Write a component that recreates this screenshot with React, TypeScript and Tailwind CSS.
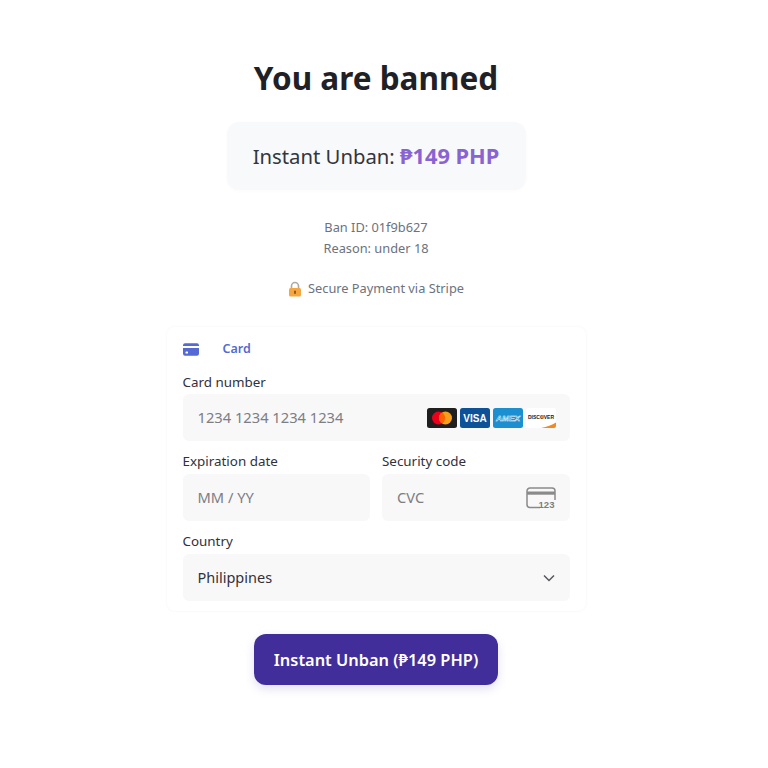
const font = { fontFamily: '"Noto Sans", "Open Sans", sans-serif' };

function LockIcon() {
  return (
    <svg width="14" height="16" viewBox="0 0 14 16" aria-hidden>
      <path d="M3.5 8V5a3.5 3.5 0 0 1 7 0v3" fill="none" stroke="#b0a9a3" strokeWidth="1.6" />
      <rect x="1" y="7" width="12" height="8.5" rx="1.5" fill="#f5a63f" />
      <rect x="6.2" y="9.6" width="1.6" height="3.4" rx="0.8" fill="#7a4a1a" />
    </svg>
  );
}

function CardTabIcon() {
  return (
    <svg width="16" height="13" viewBox="0 0 16 13" aria-hidden>
      <path d="M0 2.2A2 2 0 0 1 2 .3h12a2 2 0 0 1 2 1.9V3H0z" fill="#5469d4" />
      <path d="M0 5h16v5.8a2 2 0 0 1-2 1.9H2a2 2 0 0 1-2-1.9z" fill="#5469d4" />
      <rect x="2.5" y="8.5" width="2.5" height="2" rx="0.6" fill="#fff" />
    </svg>
  );
}

function Mastercard() {
  return (
    <svg width="30" height="20" viewBox="0 0 30 20" aria-hidden>
      <rect width="30" height="20" rx="2.5" fill="#1f1f1f" />
      <circle cx="11.5" cy="10" r="6.5" fill="#eb001b" />
      <circle cx="18.5" cy="10" r="6.5" fill="#f79e1b" />
      <path d="M15 4.5a6.5 6.5 0 0 1 0 11 6.5 6.5 0 0 1 0-11z" fill="#ff5f00" />
    </svg>
  );
}

function Visa() {
  return (
    <svg width="30" height="20" viewBox="0 0 30 20" aria-hidden>
      <rect width="30" height="20" rx="2.5" fill="#0d5299" />
      <text x="15" y="13.8" textAnchor="middle" fontSize="10" fontWeight="800" fill="#fff" fontFamily="Liberation Sans, sans-serif">VISA</text>
    </svg>
  );
}

function Amex() {
  return (
    <svg width="30" height="20" viewBox="0 0 30 20" aria-hidden>
      <rect width="30" height="20" rx="2.5" fill="#1b8fd0" />
      <text x="15" y="12.8" textAnchor="middle" fontSize="8" fontWeight="700" fontStyle="italic" fill="none" stroke="#fff" strokeWidth="0.4" textLength="24" lengthAdjust="spacingAndGlyphs" fontFamily="Liberation Sans, sans-serif">AMEX</text>
    </svg>
  );
}

function Discover() {
  return (
    <svg width="30" height="20" viewBox="0 0 30 20" aria-hidden>
      <rect width="30" height="20" rx="2.5" fill="#fff" />
      <path d="M15 20c6-1 11-3 15-5.5V18a2 2 0 0 1-2 2z" fill="#f08a24" />
      <text x="15" y="10.5" textAnchor="middle" fontSize="5" fontWeight="700" fill="#222" fontFamily="Liberation Sans, sans-serif">DISCOVER</text>
      <circle cx="16.6" cy="8.8" r="1.7" fill="#f08a24" />
    </svg>
  );
}

function CvcIcon() {
  return (
    <svg width="30" height="22" viewBox="0 0 30 22" aria-hidden>
      <path d="M14 20.5H4a3 3 0 0 1-3-3V4a3 3 0 0 1 3-3h22a3 3 0 0 1 3 3v9" fill="none" stroke="#8a8a8a" strokeWidth="1.5" />
      <rect x="1" y="4.5" width="28" height="3.2" fill="#8a8a8a" />
      <text x="20.5" y="21" textAnchor="middle" fontSize="9.5" fontWeight="700" fill="#7d7d7d" fontFamily="Liberation Sans, sans-serif">123</text>
    </svg>
  );
}

function Field({ label, placeholder, children, className, labelClass = "mb-[3px]" }: { label: string; placeholder: string; children?: React.ReactNode; className?: string; labelClass?: string }) {
  return (
    <div className={className}>
      <div className={`${labelClass} h-[20px] text-[13.4px] leading-[20px] text-[#30313d]`}>{label}</div>
      <div className="flex h-[47px] items-center justify-between rounded-[6px] bg-[#f8f8f8] pl-[15px] pr-[14px] text-[14.7px] text-[#7d7d84]">
        <span>{placeholder}</span>
        {children}
      </div>
    </div>
  );
}

export default function App() {
  return (
    <div style={font} className="flex min-h-[768px] w-[752px] flex-col items-center bg-white pt-[56px]">
      <h1 className="h-[44px] text-[31.5px] font-bold leading-[44px] text-[#1f2126]">You are banned</h1>

      <div className="mt-[22px] flex h-[68px] w-[299px] items-center justify-center rounded-[12px] bg-[#f8f9fb] text-[20.3px] text-[#33363d] shadow-[0_1px_4px_rgba(0,0,0,0.02)]">
        <span className="font-normal">Instant Unban:&nbsp;</span>
        <span className="text-[21.8px] font-bold text-[#8a63d2]">₱149 PHP</span>
      </div>

      <div className="mt-[27px] text-center text-[12.8px] leading-[21px] text-[#6b7280]">
        <div>Ban ID: 01f9b627</div>
        <div>Reason: under 18</div>
      </div>

      <div className="mt-[20px] flex h-[20px] items-center gap-[6px] text-[12.8px] text-[#6b7280]">
        <LockIcon />
        <span>Secure Payment via Stripe</span>
      </div>

      <div className="mt-[28px] h-[284px] w-[419px] rounded-[8px] px-[16px] pt-[13px] shadow-[0_0_3px_rgba(0,0,0,0.05)]">
        <div className="flex h-[18px] items-center text-[12.5px] font-semibold text-[#5469d4]">
          <CardTabIcon />
          <span className="ml-[24px]">Card</span>
        </div>

        <Field className="mt-[14px]" labelClass="mb-[2px]" label="Card number" placeholder="1234 1234 1234 1234">
          <div className="flex gap-[3px]">
            <Mastercard />
            <Visa />
            <Amex />
            <Discover />
          </div>
        </Field>

        <div className="mt-[10px] grid grid-cols-2 gap-[12px]">
          <Field label="Expiration date" placeholder="MM / YY" />
          <Field label="Security code" placeholder="CVC">
            <CvcIcon />
          </Field>
        </div>

        <div className="mt-[10px]">
          <div className="mb-[3px] h-[20px] text-[13.4px] leading-[20px] text-[#30313d]">Country</div>
          <div className="flex h-[47px] items-center justify-between rounded-[6px] bg-[#f8f8f8] pl-[15px] pr-[15px] text-[14.5px] text-[#30313d]">
            <span>Philippines</span>
            <svg width="12" height="8" viewBox="0 0 12 8" aria-hidden>
              <path d="M1 1.5l5 5 5-5" fill="none" stroke="#55555c" strokeWidth="1.5" />
            </svg>
          </div>
        </div>
      </div>

      <button className="mt-[23px] h-[51px] w-[244px] rounded-[12px] bg-[#412e9b] pt-[1px] text-[16.4px] font-semibold text-white shadow-[0_4px_10px_rgba(65,46,155,0.15)]">
        Instant Unban (₱149 PHP)
      </button>
    </div>
  );
}
